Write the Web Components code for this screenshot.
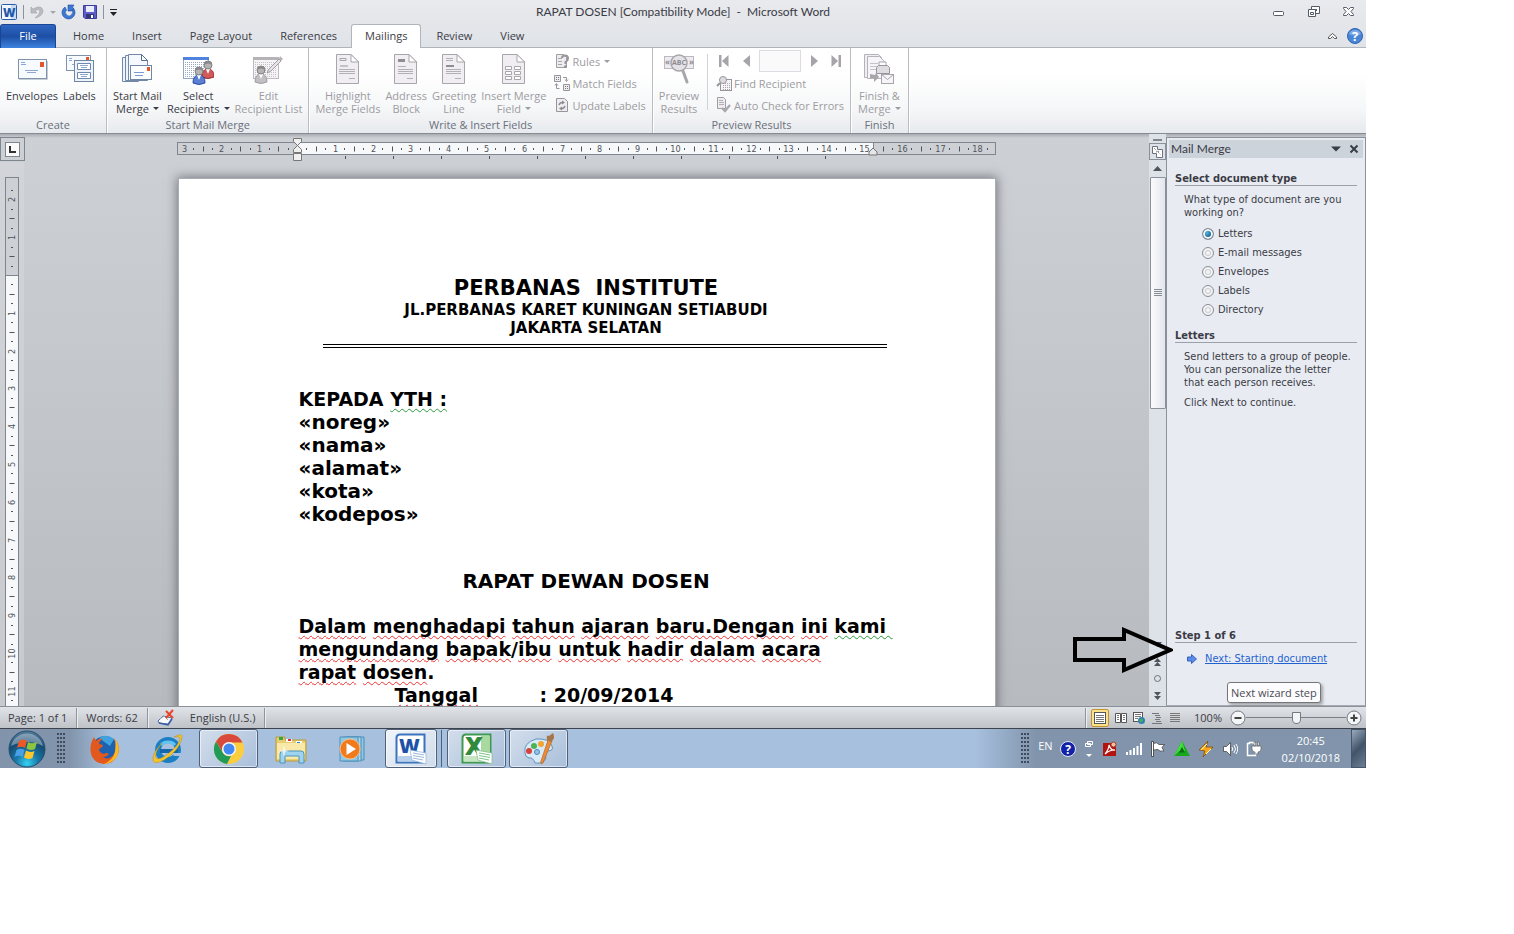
<!DOCTYPE html>
<html lang="en">
<head>
<meta charset="utf-8">
<title>RAPAT DOSEN [Compatibility Mode] - Microsoft Word</title>
<style>
  html, body { height: 100%; }
  body {
    margin: 0;
    background: #fff;
    font-family: "Open Sans", "Noto Sans", sans-serif;
    font-size: 11px;
    color: #3b3b45;
    overflow: hidden;
  }
</style>
</head>
<body>
<word-desktop></word-desktop>

<script>
// Shared by every element that has controls in its shadow root
const BASE_CSS = `
  * { box-sizing: border-box; }
  button {
    appearance: none; border: 0; padding: 0; margin: 0;
    background: none; font: inherit; color: inherit;
  }
  svg, word-icon { display: block; }
  .caret {
    display: inline-block; width: 0; height: 0; margin-left: 4px;
    border: 3px solid transparent; border-top-color: currentColor;
    border-bottom: 0; vertical-align: 3px;
  }
`;

const PAGE = `<path d="M4.500 1.500H19L26.500 9V30.500H4.500Z" fill="#f1eef3" stroke="#a8a5ab"/><path d="M19 1.500V9H26.500Z" fill="#fff" stroke="#a8a5ab"/>`;

const person = (x, y, body, edge) => `
  <path d="M${x - 6} ${y + 12}Q${x - 6} ${y + 4} ${x} ${y + 4}Q${x + 6} ${y + 4} ${x + 6} ${y + 12}Q${x} ${y + 15} ${x - 6} ${y + 12}Z" fill="${body}" stroke="${edge}"/>
  <path d="M${x - 2} ${y + 4}L${x} ${y + 9}L${x + 2} ${y + 4}Z" fill="#fff"/>
  <circle cx="${x}" cy="${y}" r="4" fill="#b4b4b4" stroke="#808080"/>
  <path d="M${x - 4} ${y}A4 4 0 0 1 ${x + 4} ${y}Q${x} ${y - 3} ${x - 4} ${y}Z" fill="#888"/>`;

const gridDots = (x, y, cols, rows, step, color) => {
  let d = "";
  for (let r = 0; r < rows; r++) {
    for (let c = 0; c < cols; c++) d += `M${x + c * step} ${y + r * step}h1v1h-1z`;
  }
  return `<path d="${d}" fill="${color}"/>`;
};

const ICONS = {
  word: [18, 18, `<rect x="1.500" y="1.500" width="15" height="15" rx="1" fill="#f3f8ff" stroke="#2b5caa"/><path d="M11 2h5v14h-5z" fill="#c7daf3"/><text x="3" y="14" font-family="Open Sans" font-weight="800" font-size="12" fill="#1f57a8">W</text>`],
  undo: [16, 16, `<path d="M2 3V9H8L6 7Q10 4 11 7Q11 10 6 14Q14 12 14 7Q13 0 4 5Z" fill="#b9bcc0" stroke="#9da1a6" stroke-width=".6"/>`],
  repeat: [16, 16, `<path d="M4 3A6.500 6.500 0 1 0 13 5L10.500 6A3.500 3.500 0 1 1 5.500 6Z" fill="#3c78d4" stroke="#1e4c9e" stroke-width=".6"/><path d="M7 1H13L11.500 3L13 5L10 7L7 7Z" fill="#3c78d4" stroke="#1e4c9e" stroke-width=".6"/>`],
  save: [16, 16, `<path d="M1.500 1.500H14.500V14.500H3L1.500 13Z" fill="#5b5fc7" stroke="#3a3c98"/><path d="M4 2H12V8H4Z" fill="#e9ecfa"/><path d="M4 10H12V14H4Z" fill="#34367c"/><path d="M9 11H11V14H9Z" fill="#fff"/>`],
  customize: [9, 9, `<path d="M1 1.500H8" stroke="#222"/><path d="M1 4H8L4.500 8Z" fill="#222"/>`],
  minimize: [14, 14, `<rect x="1.500" y="6.500" width="10" height="4" rx="1" fill="#fff" stroke="#545c69"/>`],
  restore: [14, 14, `<path d="M4.500 1.500h8v7h-8z" fill="#fff" stroke="#545c69"/><path d="M7 4h3v2h-3z" fill="#545c69"/><path d="M1.500 4.500h7v7h-7z" fill="#fff" stroke="#545c69"/><path d="M3.500 7.500h3v2h-3z" fill="none" stroke="#545c69"/>`],
  close: [14, 14, `<path d="M1.500 2.500h3l2 2 2-2h3v1l-2.500 3 2.500 3v1h-3l-2-2-2 2h-3v-1l2.500-3-2.500-3z" fill="#fff" stroke="#545c69"/>`],
  collapse: [11, 10, `<path d="M1.500 7.500V6L5.500 2.500L9.500 6V7.500H7.500L5.500 5.500L3.500 7.500Z" fill="#fff" stroke="#444" stroke-width=".9"/>`],
  help: [18, 18, `<circle cx="9" cy="9" r="7.500" fill="#4a86d8" stroke="#2f62b0"/><path d="M3 7A6.500 6.500 0 0 1 15 7Q9 10 3 7Z" fill="#7faae6"/><text x="9" y="14" text-anchor="middle" font-family="Open Sans" font-weight="700" font-size="13" fill="#fff">?</text>`],

  envelopes: [32, 32, `<rect x="2.500" y="6.500" width="28" height="19" fill="#f7fafe" stroke="#7f93ad"/><path d="M3 26.500H31.500V8" stroke="#c5ccd6" fill="none"/><path d="M24 9h4v5h-4z" fill="#e2562b"/><path d="M5 9.500h4M5 11.500h5M9 17.500h13M11 19.500h9" stroke="#8ba6cf"/>`],
  labels: [32, 32, `<rect x="3.500" y="2.500" width="24" height="15" fill="#f7fafe" stroke="#7f93ad"/><path d="M23 4h3v4h-3z" fill="#e2562b"/><path d="M6 5.500h3M6 7.500h3M9 11.500h2" stroke="#8ba6cf"/><rect x="11.500" y="7.500" width="19" height="21" fill="#eef3fa" stroke="#6f86a5"/><path d="M14.500 10.500h13v6h-13zM14.500 19.500h13v6h-13z" fill="#fff" stroke="#6c88b0"/><path d="M17 12.500h8M18 14.500h6M17 21.500h8M18 23.500h6" stroke="#8ba6cf"/>`],
  startMerge: [32, 32, `<path d="M1.500 4.500h16v24h-16z" fill="#edf3fb" stroke="#7288a6"/><path d="M4.500 2.500h16v25h-16z" fill="#edf3fb" stroke="#7288a6"/><path d="M7.500 1.500h13l6 6v20h-19z" fill="#f5f9ff" stroke="#7288a6"/><path d="M20.500 1.500v6h6z" fill="#fff" stroke="#56708f"/><rect x="9.500" y="12.500" width="21" height="14" fill="#fbfdff" stroke="#6f86a5"/><path d="M26 14h3v4h-3z" fill="#e2562b"/><path d="M13 19.500h10M14 22.500h8" stroke="#7a9bce"/>`],
  selectRecipients: [32, 32, `<rect x="1.500" y="4.500" width="25" height="21" fill="#fff" stroke="#93a7c2"/><path d="M1 4h26v3h-26z" fill="#4f83dc"/>${gridDots(3, 9, 11, 8, 2, "#9aaac2")}${person(26, 12, "#d35a5a", "#9e2f2f")}${person(17, 18, "#5d7fd3", "#2d4ea3")}`],
  editRecipients: [32, 32, `<rect x="1.500" y="4.500" width="25" height="21" fill="#f6f4f7" stroke="#bdbabf"/><path d="M1 4h26v3h-26z" fill="#b5b2b8"/>${gridDots(3, 9, 11, 8, 2, "#c4c1c7")}<path d="M15 20L17 16L27 6L29 8L19 18Z" fill="#e5e3e6" stroke="#a09da3"/><path d="M27 6L28 3L31 6L29 8Z" fill="#b5b2b8"/>${person(9, 17, "#c3c0c5", "#a09da3")}`],
  highlight: [32, 32, `${PAGE}<path d="M8 5.500h6v2h-6z" fill="none" stroke="#a8a5ab"/><path d="M8 12h8v2h-8z" fill="#c4c1c7"/><path d="M7 16.500h16M7 18.500h16M7 20.500h16M17 25.500h6" stroke="#b2afb5"/>`],
  address: [32, 32, `${PAGE}<path d="M8 6h7v3h-7z" fill="#8f8d92"/><path d="M8 13.500h8M8 16.500h15M8 18.500h15M8 20.500h15M17 25.500h6" stroke="#b2afb5"/>`],
  greeting: [32, 32, `${PAGE}<path d="M8 5.500h7M8 7.500h7M8 16.500h15M8 18.500h15M8 20.500h15M17 25.500h6" stroke="#b2afb5"/><path d="M8 12h8v2h-8z" fill="#8f8d92"/>`],
  insertField: [32, 32, `${PAGE}<path d="M7.500 13.500h6v3h-6zM16.500 13.500h6v3h-6zM7.500 18.500h6v3h-6zM16.500 18.500h6v3h-6zM7.500 23.500h6v3h-6zM16.500 23.500h6v3h-6z" fill="#fff" stroke="#a8a5ab"/>`],
  preview: [32, 32, `<rect x="1.500" y="3.500" width="29" height="12" fill="#eeecf0" stroke="#bdbabf"/><text x="2" y="12" font-family="Open Sans" font-weight="700" font-size="8" fill="#8d8a90">«</text><text x="26" y="12" font-family="Open Sans" font-weight="700" font-size="8" fill="#8d8a90">»</text><path d="M20 18L24 29" stroke="#a8a5ab" stroke-width="3" stroke-linecap="round"/><circle cx="16" cy="10" r="8" fill="#e4e2e6" stroke="#a8a5ab" stroke-width="1.500"/><text x="16" y="12" text-anchor="middle" font-family="Open Sans" font-weight="700" font-size="7" fill="#8d8a90">ABC</text>`],
  finish: [32, 32, `<path d="M1.500 1.500h14l3 3v20h-17z" fill="#f1eef3" stroke="#b5b2b8"/><path d="M4.500 3.500h12l6 6v16h-18z" fill="#f6f4f8" stroke="#b5b2b8"/><path d="M7 10.500h8M7 13.500h8M7 16.500h7" stroke="#c5c2c8"/><path d="M16 9h7v5h-7z" fill="#fff" stroke="#a8a5ab"/><path d="M13.500 14.500l2-2h9l2 2v6h-13z" fill="#dedce0" stroke="#98959b"/><path d="M7 21v4h4v4l5-5-3-4-1 2z" fill="#a8a5ab"/><rect x="18.500" y="21.500" width="12" height="9" fill="#f6f4f8" stroke="#a8a5ab"/><path d="M18.500 21.500l6 5 6-5" fill="none" stroke="#a8a5ab"/>`],

  rules: [16, 16, `<path d="M2.500 1.500h7l3 3v10h-10z" fill="#eeecf0" stroke="#a09da3"/><path d="M4 5.500h4M4 8.500h4M4 11.500h4" stroke="#a8a5ab"/><path d="M8 5q0-2.500 3-2.500t3 3q0 2-2.500 3.500v2" fill="none" stroke="#98959b" stroke-width="2"/><circle cx="11.500" cy="13.500" r="1.300" fill="#8d8a90"/>`],
  match: [16, 16, `<path d="M.5 .5h6v6h-6zM9.500 9.500h6v6h-6z" fill="#eeecf0" stroke="#98959b"/>${gridDots(2, 2, 2, 2, 2, "#777")}${gridDots(11, 11, 2, 2, 2, "#777")}<path d="M9 2.500h3.500v3M11 4.500l1.500 2 1.500-2M2.500 9v4.500h3M1 10.500l1.500-2 1.500 2" fill="none" stroke="#98959b"/>`],
  update: [16, 16, `<path d="M2.500 1.500h8l3 3v10h-11z" fill="#eeecf0" stroke="#98959b"/><path d="M5 8q1-3 4-2.500M11 9q-1 3-4 2.500" fill="none" stroke="#8d8a90" stroke-width="1.500"/><path d="M8 3.500l3 2-3 2zM8 9.500l-3 2 3 2z" fill="#8d8a90"/>`],
  first: [16, 16, `<path d="M3 2h2.500v12h-2.500zM12.500 2v12L6 8z" fill="#a6a4a9"/>`],
  prev: [16, 16, `<path d="M12 2v12L5 8z" fill="#a6a4a9"/>`],
  next: [16, 16, `<path d="M4 2v12L11 8z" fill="#a6a4a9"/>`],
  last: [16, 16, `<path d="M3.500 2v12L10 8zM10.500 2h2.500v12h-2.500z" fill="#a6a4a9"/>`],
  find: [16, 16, `<rect x="4.500" y="4.500" width="11" height="11" fill="#f6f4f7" stroke="#98959b"/>${gridDots(7, 8, 4, 4, 2, "#a8a5ab")}<circle cx="7" cy="5" r="3.500" fill="#dedce0" stroke="#98959b"/><path d="M4 8L1 11" stroke="#98959b" stroke-width="2"/>`],
  check: [16, 16, `<path d="M1.500 .5h6l2 2v9h-8z" fill="#eeecf0" stroke="#a09da3"/><path d="M3 3.500h4M3 5.500h5M3 7.500h5" stroke="#b2afb5"/><path d="M6 11L9 14L14 8" fill="none" stroke="#a8a5ab" stroke-width="2.200"/>`],

  toolbox: [12, 12, `<path d="M.5 .5h5v3h5v8h-6v-4h-4z" fill="#fff" stroke="#6d7480"/><path d="M2 2l7 7M4 6l4-1" stroke="#6d7480" stroke-dasharray="1 1"/>`],
  paneArrow: [10, 10, `<path d="M.5 3h4V.5L9.500 5 4.500 9.500V7h-4z" fill="#5a8be6" stroke="#3563c0"/>`],
  proof: [18, 18, `<path d="M1 12l5-5 9 2-4 6-9-1z" fill="#f7f9fd" stroke="#4a6caf"/><path d="M2 14l9 2 4-6" fill="none" stroke="#3a5da6" stroke-width="1.500"/><path d="M3 10l4-3 4 4" fill="none" stroke="#9aa"/><path d="M9 2l7 7M16 1l-7 8" stroke="#e8452a" stroke-width="2"/>`],
  printLayout: [12, 12, `<rect x=".5" y=".5" width="11" height="11" fill="#fff" stroke="#555"/><path d="M2 3.500h8M2 5.500h8M2 7.500h8M2 9.500h8" stroke="#777"/>`],
  reading: [12, 12, `<path d="M.5 1.500h5v9h-5zM6.500 1.500h5v9h-5z" fill="#fff" stroke="#555"/><path d="M2 3.500h2M2 5.500h2M2 7.500h2M8 3.500h2M8 5.500h2M8 7.500h2" stroke="#777"/>`],
  web: [12, 12, `<rect x=".5" y=".5" width="9" height="9" fill="#fff" stroke="#555"/><path d="M2 2.500h6M2 4.500h6M2 6.500h3" stroke="#777"/><circle cx="8.500" cy="8.500" r="3.500" fill="#2f7fb5"/><path d="M6 8q3-3 4 0-1 3-3 2z" fill="#4fae50"/>`],
  outline: [12, 12, `<path d="M1 1.500h7M4 3.500h5M5 5.500h5M4 7.500h5M5 9.500h5M1 11.500h10" stroke="#777"/>`],
  draft: [12, 12, `<path d="M1 1.500h10M1 3.500h10M1 5.500h10M1 7.500h10M1 9.500h10" stroke="#777"/>`],
  minus: [16, 16, `<circle cx="8" cy="8" r="7" fill="#f4f5f6" stroke="#747a82"/><path d="M4.500 8h7" stroke="#444" stroke-width="2"/>`],
  plus: [16, 16, `<circle cx="8" cy="8" r="7" fill="#f4f5f6" stroke="#747a82"/><path d="M4.500 8h7M8 4.500v7" stroke="#444" stroke-width="2"/>`],

  start: [38, 38, `<defs><radialGradient id="orb" cx=".5" cy=".9" r=".9"><stop offset="0" stop-color="#35d3f2"/><stop offset=".35" stop-color="#1a78a8"/><stop offset=".7" stop-color="#154a70"/><stop offset="1" stop-color="#5b7f9d"/></radialGradient></defs><circle cx="19" cy="19" r="18" fill="url(#orb)" stroke="#24506f"/><path d="M3 16A16.500 16.500 0 0 1 35 16Q19 8 3 16Z" fill="#fff" opacity=".35"/><path d="M11 11Q15 8 19 11L17 18Q13 15.500 9 18Z" fill="#ea5a28"/><path d="M20 12Q24 14.500 29 12L27 19Q22 21 18.500 18.500Z" fill="#8cc63f"/><path d="M8.500 20Q12.500 17.500 16.500 20L14.500 27Q10.500 24.500 6.500 27Z" fill="#4aa0e4"/><path d="M18 20.500Q22 23 26.500 21L24.500 28Q20 30 16 27.500Z" fill="#fcc62e"/>`],
  firefox: [32, 32, `<circle cx="16" cy="16" r="13" fill="#1d62b0"/><path d="M10 5Q17 0 25 6L21 13Z" fill="#3fa2dd"/><path d="M25 5Q32 13 29 21Q25 31 15 31Q3 30 1.500 18Q1 10 5 4L7 8Q10 5 14 6Q10 8 10 11L14 12Q14 14 10 16Q10 20 15 21Q18 19 20 21Q17 25 13 24Q20 28 25 21Q29 14 25 5Z" fill="#e3581c"/><path d="M26 6Q33 16 27 25Q21 31 15 31Q24 27 26 19Q27 11 26 6Z" fill="#fdb91d"/>`],
  ie: [34, 32, `<circle cx="18" cy="17" r="10" fill="none" stroke="#1b7fc4" stroke-width="6"/><path d="M10 16h18v4h-18z" fill="#1467ad"/><path d="M22 20h9v3l-7 0z" fill="#a8c0de"/><path d="M11 12A9 8 0 0 1 25 12" fill="none" stroke="#62c4f0" stroke-width="3"/><path d="M24 4Q33-1 32 5Q29 18 14 27Q2 33 3 25Q4 18 12 10Q4 20 6 25Q9 28 19 20Q30 11 30 5Q30 3 24 4Z" fill="#f4c430" stroke="#b98b12" stroke-width=".5"/>`],
  chrome: [32, 32, `<circle cx="16" cy="16" r="15" fill="#fccd3e"/><path d="M3 8.500A15 15 0 0 1 29.500 9.500H16A7 7 0 0 0 9.500 19Z" fill="#d94a3d"/><path d="M3 8.500L10 20Q13 24 18 23L14 31A15 15 0 0 1 3 8.500Z" fill="#229a58"/><circle cx="16" cy="16" r="7" fill="#f4f6f8"/><circle cx="16" cy="16" r="5.500" fill="#4387f2"/>`],
  explorer: [34, 32, `<path d="M2 4h9v3h21v21H2z" fill="#e9cf72" stroke="#b8993a"/><path d="M5 4h4v3h-4z" fill="#35a544"/><path d="M12 6h6v3h-6z" fill="#fff"/><path d="M14 6h3v2h-3z" fill="#d33"/><path d="M22 8h6v3h-6z" fill="#fff"/><path d="M23 9h3v1h-3z" fill="#28d"/><path d="M3 10h28v16H3z" fill="#f8e9a8"/><path d="M6 30V21Q6 18 9 18H27Q30 18 30 21V30H25V23H11V30Z" fill="#9fd4ef" stroke="#4f93bb"/><path d="M10 12l1 5 4 1-4 1-1 5-1-5-4-1 4-1z" fill="#fff" opacity=".8"/>`],
  media: [32, 32, `<path d="M10 4h17v23h-17z" fill="#8fc4e2" stroke="#4c8fb8"/><path d="M6 4h18v24h-18z" fill="#a9d5ec" stroke="#4c8fb8"/><path d="M3 4h18v24h-18z" fill="#8fc8e6" stroke="#4c8fb8"/><circle cx="13" cy="16" r="10" fill="#f07b1d" stroke="#f9c08a"/><path d="M9.500 10v12L19 16z" fill="#fff"/>`],
  wordApp: [32, 32, `<path d="M1.500 5Q1.500 1.500 5 1.500H29.500V29.500H1.500Z" fill="#fff" stroke="#3a72be" stroke-width="2"/><path d="M3 23H29V28.500H3Z" fill="#b9d0ec"/><text x="4" y="20" font-family="Open Sans" font-weight="800" font-size="20" fill="#1d52a8">W</text><path d="M15 17L31 20V31L17 27Z" fill="#fff" stroke="#8fb2df" stroke-width=".7"/><path d="M18 20l11 2M18 22.500l11 2M18 25l10 2" stroke="#9db8da"/>`],
  excelApp: [32, 32, `<path d="M1.500 5Q1.500 1.500 5 1.500H29.500V29.500H1.500Z" fill="#fff" stroke="#3d9a50" stroke-width="2"/><path d="M20 3H28.500V28.500H20Z" fill="#a9d99f"/><path d="M3 23H29V28.500H3Z" fill="#c6e5c1"/><text x="4" y="22" font-family="Open Sans" font-weight="800" font-size="25" fill="#2f8a3e">X</text><path d="M15 17L31 20V31L17 27Z" fill="#fff" stroke="#7cb884" stroke-width=".7"/><path d="M18 20l11 2M18 22.500l11 2M18 25l10 2" stroke="#7cc488"/>`],
  paint: [34, 32, `<path d="M3 20Q1 10 14 6Q27 5 30 13Q32 18 25 18Q21 20 24 25Q22 31 13 30Q11 24 7 25Q3 24 3 20Z" fill="#d8eaf7" stroke="#5d93bd"/><circle cx="7" cy="18" r="3" fill="#d8403a"/><circle cx="12" cy="13" r="3" fill="#4db252"/><circle cx="19" cy="11" r="3" fill="#f1a531"/><circle cx="15" cy="19" r="2.500" fill="#8fc6e8" stroke="#4f86b0"/><path d="M26 7L30 8L21 30Q18 32 19 28Z" fill="#ee8b36" stroke="#a65c1c" stroke-width=".6"/><path d="M25 7Q24 1 27 3L31 0Q34 5 29 9Z" fill="#a5764a"/>`],

  trayHelp: [16, 16, `<circle cx="8" cy="8" r="7.500" fill="#1122a8" stroke="#e5e8f4"/><text x="8" y="13" text-anchor="middle" font-family="Open Sans" font-weight="700" font-size="12" fill="#fff">?</text>`],
  langBar: [10, 18, `<path d="M3.500 1.500h5v3h-5zM1.500 3.500h5v3h-5z" fill="#8194ab" stroke="#fff"/><path d="M2 14h6l-3 3z" fill="#fff"/>`],
  pdf: [16, 16, `<path d="M1 2h13v13H1z" fill="#b3140f"/><path d="M3 13Q7 8 7 4Q9 10 13 9Q7 9 3 13" fill="none" stroke="#fff" stroke-width="1.200"/><circle cx="11.500" cy="3.500" r="2.500" fill="#f2c7a0" stroke="#a2382e"/>`],
  signal: [16, 16, `<path d="M0 11h2v3h-2zM3.500 9h2v5h-2zM7 7h2v7h-2zM10.500 5h2v9h-2zM14 2h2v12h-2z" fill="#fff"/>`],
  flag: [16, 16, `<path d="M1.500 .5h2v15h-2z" fill="#fff" stroke="#333" stroke-width=".8"/><path d="M3.500 2.500Q7 .5 9 3.500H14.500L12 6.500L14 10Q9 11 8 8.500L3.500 9Z" fill="#fff" stroke="#444" stroke-width=".8"/>`],
  smadav: [16, 16, `<path d="M8 0L16 15H0Z" fill="#16a81c"/><path d="M8 0L11 10H5L0 15Z" fill="#42dd3c"/><path d="M8 6L11 11.500H5Z" fill="#0a6d10"/>`],
  winamp: [16, 16, `<path d="M1 9L10 0 8 6H15L5 16 7 10Z" fill="#f6a821" stroke="#7d4d12" stroke-width=".8"/><path d="M3 9L9 3M8 13L13 8" stroke="#fff2a8"/>`],
  volume: [16, 16, `<path d="M1.500 5.500h3L8.500 1.500v13l-4-4h-3z" fill="#fff" stroke="#444" stroke-width=".8"/><path d="M10 6q1.500 2 0 4M12 4q3 4 0 8M14 3q3.500 5 0 10" fill="none" stroke="#fff"/>`],
  power: [16, 16, `<path d="M1.500 2.500h2v-1h4v1h2v12h-8z" fill="none" stroke="#fff" stroke-width="1.500"/><path d="M6 5h9v3q0 3-3 3v2h-3v-2q-3 0-3-3zM8 1h1.500v4H8zM11.500 1H13v4h-1.500z" fill="#fff" stroke="#555" stroke-width=".6"/>`],
};

class WordIcon extends HTMLElement {
  constructor() {
    super();
    this.attachShadow({ mode: "open" });
  }

  connectedCallback() {
    const [w, h, body] = ICONS[this.getAttribute("name")];
    this.shadowRoot.innerHTML = `
      <style>:host { display: inline-block; flex: none; } svg { display: block; }</style>
      <svg width="${w}" height="${h}" viewBox="0 0 ${w} ${h}" aria-hidden="true">${body}</svg>
    `;
  }
}

class WordTitlebar extends HTMLElement {
  constructor() {
    super();
    this.attachShadow({ mode: "open" });
    this.shadowRoot.innerHTML = `
      <style>
        ${BASE_CSS}
        :host {
          display: grid; grid-template-columns: 1fr auto 1fr; align-items: center;
          height: 24px; background: linear-gradient(#e8eaed, #e4e6ea);
        }
        .quick { display: flex; align-items: center; gap: 5px; }
        .quick .sep { width: 1px; height: 14px; background: #8d9299; }
        .quick .caret { margin: 0; color: #a4a8ad; }
        .title {
          margin: 0; font: 12px/16px "Lato", "Open Sans", sans-serif;
          color: #3b3b45; white-space: pre;
        }
        .win { display: flex; justify-content: flex-end; gap: 21px; padding-right: 10px; }
      </style>
      <div class="quick">
        <word-icon name="word"></word-icon>
        <span class="sep"></span>
        <button aria-label="Undo"><word-icon name="undo"></word-icon></button>
        <span class="caret"></span>
        <button aria-label="Repeat"><word-icon name="repeat"></word-icon></button>
        <button aria-label="Save"><word-icon name="save"></word-icon></button>
        <span class="sep"></span>
        <button aria-label="Customize"><word-icon name="customize"></word-icon></button>
      </div>
      <h1 class="title"><slot></slot></h1>
      <div class="win">
        <button aria-label="Minimize"><word-icon name="minimize"></word-icon></button>
        <button aria-label="Restore"><word-icon name="restore"></word-icon></button>
        <button aria-label="Close"><word-icon name="close"></word-icon></button>
      </div>
    `;
  }
}

class WordTabs extends HTMLElement {
  constructor() {
    super();
    this.attachShadow({ mode: "open" });
    this.shadowRoot.innerHTML = `
      <style>
        ${BASE_CSS}
        :host {
          display: flex; height: 24px; background: linear-gradient(#e4e6ea, #dfe3e7);
          box-shadow: inset 0 -1px #b0b5bb;
        }
        button { padding: 0 13px 2px; border: 1px solid transparent; border-bottom: 0; }
        .file {
          width: 56px; margin-right: 3px; color: #fff; border-color: #1a4594;
          border-radius: 3px 3px 0 0;
          background: linear-gradient(#2f66c2, #1d4fa4 50%, #3d82e0);
        }
        .on { background: #fff; border-color: #b0b5bb; border-radius: 3px 3px 0 0; margin-right: 1px; }
        .tools { display: flex; align-items: center; gap: 8px; margin-left: auto; padding-right: 2px; }
        .tools button { padding: 0; border: 0; }
      </style>
      <button class="file">File</button>
      <button>Home</button>
      <button>Insert</button>
      <button>Page Layout</button>
      <button>References</button>
      <button class="on">Mailings</button>
      <button>Review</button>
      <button>View</button>
      <div class="tools">
        <button aria-label="Minimize the Ribbon"><word-icon name="collapse"></word-icon></button>
        <button aria-label="Help"><word-icon name="help"></word-icon></button>
      </div>
    `;
  }
}

class RibbonGroup extends HTMLElement {
  constructor() {
    super();
    this.attachShadow({ mode: "open" });
    this.shadowRoot.innerHTML = `
      <style>
        :host {
          display: flex; flex-direction: column; padding: 0 6px; box-sizing: border-box;
          border-right: 1px solid #b9bdc3; box-shadow: 1px 0 #fff;
        }
        .items { display: flex; flex: 1; gap: 5px; }
        .label { height: 17px; line-height: 17px; text-align: center; color: #6b6f7b; }
      </style>
      <div class="items"><slot></slot></div>
      <div class="label"></div>
    `;
  }

  connectedCallback() {
    this.shadowRoot.querySelector(".label").textContent = this.getAttribute("label");
  }
}

class RibbonButton extends HTMLElement {
  constructor() {
    super();
    this.attachShadow({ mode: "open" });
  }

  connectedCallback() {
    const off = this.hasAttribute("off") ? "disabled" : "";
    const menu = this.hasAttribute("menu") ? `<span class="caret"></span>` : "";
    this.shadowRoot.innerHTML = `
      <style>
        ${BASE_CSS}
        :host { display: block; }
        button {
          display: flex; flex-direction: column; align-items: center;
          padding-top: 5px; line-height: 13px; white-space: nowrap;
        }
        .text { padding-top: 4px; }
        button:disabled { color: #9d9ca2; }
        :host([small]) button { flex-direction: row; gap: 2px; height: 22px; padding: 0; }
        :host([small]) .text { padding: 0; }
      </style>
      <button ${off}>
        <word-icon name="${this.getAttribute("icon")}"></word-icon>
        <span class="text"><slot></slot>${menu}</span>
      </button>
    `;
  }
}

class RecordNav extends HTMLElement {
  constructor() {
    super();
    this.attachShadow({ mode: "open" });
    this.shadowRoot.innerHTML = `
      <style>
        ${BASE_CSS}
        :host { display: flex; align-items: center; justify-content: space-between; height: 22px; }
        input {
          width: 42px; height: 22px; padding: 0 2px; font: inherit;
          border: 1px solid #dcdce2; background: #fafafb;
        }
      </style>
      <button disabled aria-label="First record"><word-icon name="first"></word-icon></button>
      <button disabled aria-label="Previous record"><word-icon name="prev"></word-icon></button>
      <input disabled aria-label="Record">
      <button disabled aria-label="Next record"><word-icon name="next"></word-icon></button>
      <button disabled aria-label="Last record"><word-icon name="last"></word-icon></button>
    `;
  }
}

class WordRibbon extends HTMLElement {
  constructor() {
    super();
    this.attachShadow({ mode: "open" });
    this.shadowRoot.innerHTML = `
      <style>
        :host {
          display: flex; height: 85px; border-bottom: 1px solid #868c94;
          background: linear-gradient(#fff 30%, #f6f7f8 70%, #e7eaee);
        }
        .col { display: flex; flex-direction: column; padding: 2px 0 0 3px; }
        .sep { width: 1px; height: 56px; margin: 6px 0 0 3px; background: #d0d3d8; }
        .create { width: 107px; }
        .finish { padding: 0 7px; }
      </style>
      <ribbon-group class="create" label="Create">
        <ribbon-button icon="envelopes">Envelopes</ribbon-button>
        <ribbon-button icon="labels">Labels</ribbon-button>
      </ribbon-group>
      <ribbon-group label="Start Mail Merge">
        <ribbon-button icon="startMerge" menu>Start Mail<br>Merge</ribbon-button>
        <ribbon-button icon="selectRecipients" menu>Select<br>Recipients</ribbon-button>
        <ribbon-button icon="editRecipients" off>Edit<br>Recipient List</ribbon-button>
      </ribbon-group>
      <ribbon-group label="Write &amp; Insert Fields">
        <ribbon-button icon="highlight" off>Highlight<br>Merge Fields</ribbon-button>
        <ribbon-button icon="address" off>Address<br>Block</ribbon-button>
        <ribbon-button icon="greeting" off>Greeting<br>Line</ribbon-button>
        <ribbon-button icon="insertField" off menu>Insert Merge<br>Field</ribbon-button>
        <div class="col">
          <ribbon-button small icon="rules" off menu>Rules</ribbon-button>
          <ribbon-button small icon="match" off>Match Fields</ribbon-button>
          <ribbon-button small icon="update" off>Update Labels</ribbon-button>
        </div>
      </ribbon-group>
      <ribbon-group label="Preview Results">
        <ribbon-button icon="preview" off>Preview<br>Results</ribbon-button>
        <span class="sep"></span>
        <div class="col">
          <record-nav></record-nav>
          <ribbon-button small icon="find" off>Find Recipient</ribbon-button>
          <ribbon-button small icon="check" off>Auto Check for Errors</ribbon-button>
        </div>
      </ribbon-group>
      <ribbon-group class="finish" label="Finish">
        <ribbon-button icon="finish" off menu>Finish &amp;<br>Merge</ribbon-button>
      </ribbon-group>
    `;
  }
}

// Centimetre ruler. "from" and "to" are where the bar starts and ends,
// measured in pixels from the zero mark; "end" is where the text area stops.
class DocRuler extends HTMLElement {
  constructor() {
    super();
    this.attachShadow({ mode: "open" });
  }

  connectedCallback() {
    const CM = 37.8;
    const from = Number(this.getAttribute("from"));
    const to = Number(this.getAttribute("to"));
    const end = Number(this.getAttribute("end"));
    const vertical = this.hasAttribute("vertical");
    const place = (p) => Math.round(p) + 0.5;
    let marks = "";
    let text = "";
    for (let q = Math.ceil((from + 4) / CM * 4); q * CM / 4 < to - 4; q++) {
      const p = place(q * CM / 4);
      if (q === 0) continue;
      if (q % 4 === 0) {
        const n = Math.abs(q / 4);
        text += vertical
          ? `<text transform="translate(10 ${p}) rotate(-90)">${n}</text>`
          : `<text x="${p}" y="10">${n}</text>`;
      } else {
        const r = q % 2 === 0 ? 2.5 : 1;
        marks += vertical ? `M${7 - r} ${p}h${r * 2}` : `M${p} ${7 - r}v${r * 2}`;
      }
    }
    const len = to - from + 1;
    let extra = "";
    if (!vertical) {
      for (let x = 48; x < end - 24; x += 48) marks += `M${x + 0.5} 14v3`;
      extra = `
        <path d="M-3.500-3.500h8v3l-4 4 4 4v3h-8v-3l4-4-4-4zM-3.500 11.500h8v7h-8z" fill="#f0f0f0" stroke="#777"/>
        <path d="M${end - 4} 13v-3l4-4 4 4v3z" fill="#e6e6e6" stroke="#777"/>
      `;
    }
    const box = vertical
      ? [`0 ${from} 14 ${len}`, 14, len]
      : [`${from} 0 ${len} 14`, len, 14];
    const rect = (a, b, fill) => vertical
      ? `<rect x=".5" y="${a + 0.5}" width="13" height="${b - a}" fill="${fill}" stroke="#80858f"/>`
      : `<rect x="${a + 0.5}" y=".5" width="${b - a}" height="12" fill="${fill}" stroke="#80858f"/>`;
    this.shadowRoot.innerHTML = `
      <style>
        :host { display: block; }
        svg { display: block; overflow: visible; }
        text { font: 9px "DejaVu Sans Condensed", "DejaVu Sans", sans-serif; fill: #50535b; text-anchor: middle; }
      </style>
      <svg width="${box[1]}" height="${box[2]}" viewBox="${box[0]}">
        ${rect(from, to, "#cdd0d5")}
        ${rect(0, end, "#f7f8f9")}
        <path d="${marks}" stroke="#50535b"/>
        ${text}${extra}
      </svg>
    `;
  }
}

class DocPage extends HTMLElement {
  constructor() {
    super();
    this.attachShadow({ mode: "open" });
    this.shadowRoot.innerHTML = `
      <style>
        :host {
          display: block; width: 818px; min-height: 1056px; box-sizing: border-box;
          padding: 96px 121px 0 120px; background: #fff; color: #000;
          border: 1px solid #a9adb3; border-bottom: 0;
          box-shadow: 0 0 10px 1px rgba(60, 64, 70, .6);
          font: bold 19px/23px "DejaVu Sans", Verdana, sans-serif;
        }
        p, h2, h3 { margin: 0; font: inherit; white-space: pre; }
        .head { text-align: center; font-size: 15px; line-height: 18px; }
        .head h2 { font-size: 21px; line-height: 26px; }
        hr {
          height: 4px; margin: 7px -13px 40px 24px; box-sizing: border-box;
          border: solid #000; border-width: 1px 0;
        }
        .field { font-size: 20px; }
        h3 { margin: 44px 0 22px; font-size: 20px; text-align: center; }
        .row { display: grid; grid-template-columns: 145px auto; padding-left: 96px; }
        s, u {
          text-decoration: underline wavy #e33 1px; text-decoration-skip-ink: none;
          text-underline-offset: 2px;
        }
        u { text-decoration-color: #2a9a3a; }
      </style>
      <div class="head">
        <h2>PERBANAS  INSTITUTE</h2>
        <p>JL.PERBANAS KARET KUNINGAN SETIABUDI</p>
        <p>JAKARTA SELATAN</p>
      </div>
      <hr>
      <p>KEPADA <u>YTH :</u></p>
      <p class="field">«noreg»</p>
      <p class="field">«nama»</p>
      <p class="field">«alamat»</p>
      <p class="field">«kota»</p>
      <p class="field">«kodepos»</p>
      <h3>RAPAT DEWAN DOSEN</h3>
      <p><s>Dalam</s> <s>menghadapi</s> <s>tahun</s> <s>ajaran</s> <s>baru.Dengan</s> <s>ini</s> <u>kami </u></p>
      <p><s>mengundang</s> <s>bapak</s>/<s>ibu</s> <s>untuk</s> <s>hadir</s> <s>dalam</s> <s>acara</s></p>
      <p><s>rapat</s> <s>dosen</s>.</p>
      <p class="row"><span><s>Tanggal</s></span><span>: 20/09/2014</span></p>
    `;
  }
}

class DocScrollbar extends HTMLElement {
  constructor() {
    super();
    this.attachShadow({ mode: "open" });
    this.shadowRoot.innerHTML = `
      <style>
        ${BASE_CSS}
        :host {
          display: flex; flex-direction: column; align-items: center;
          width: 17px; padding: 5px 0 2px; background: #dde1e8;
        }
        .split { width: 9px; height: 2px; background: #80858f; }
        .tool { width: 17px; height: 17px; padding: 2px; margin-top: 2px; border: 1px solid #8b919b; }
        .arrow { width: 17px; height: 17px; display: grid; place-items: center; }
        .thumb {
          width: 16px; flex: 0 0 41%; display: grid; place-items: center;
          border: 1px solid #8b919b; border-radius: 1px;
          background: linear-gradient(90deg, #fbfbfd, #e3e6ed);
        }
        .nav { margin-top: auto; display: flex; flex-direction: column; }
      </style>
      <span class="split"></span>
      <button class="tool" aria-label="View Ruler"><word-icon name="toolbox"></word-icon></button>
      <button class="arrow" aria-label="Scroll up"><svg width="9" height="5"><path d="M0 5L4.500 0 9 5z" fill="#50535b"/></svg></button>
      <div class="thumb"><svg width="8" height="8"><path d="M0 .5h8M0 2.500h8M0 4.500h8M0 6.500h8" stroke="#888e98"/></svg></div>
      <div class="nav">
        <button class="arrow" aria-label="Scroll down"><svg width="9" height="5"><path d="M0 0L4.500 5 9 0z" fill="#50535b"/></svg></button>
        <button class="arrow" aria-label="Previous page"><svg width="7" height="8"><path d="M0 4L3.500 0 7 4zM0 8L3.500 4 7 8z" fill="#50535b"/></svg></button>
        <button class="arrow" aria-label="Select browse object"><svg width="9" height="9"><circle cx="4.500" cy="4.500" r="3" fill="none" stroke="#6b6f78"/></svg></button>
        <button class="arrow" aria-label="Next page"><svg width="7" height="8"><path d="M0 0L3.500 4 7 0zM0 4L3.500 8 7 4z" fill="#50535b"/></svg></button>
      </div>
    `;
  }
}

class PaneSection extends HTMLElement {
  constructor() {
    super();
    this.attachShadow({ mode: "open" });
    this.shadowRoot.innerHTML = `
      <style>
        :host { display: block; }
        h3 {
          margin: 0 0 7px; font: bold 11px/13px "DejaVu Sans Condensed", "DejaVu Sans", sans-serif;
          border-bottom: 1px solid #9ba0a9;
        }
        .body { padding-left: 9px; }
      </style>
      <h3></h3>
      <div class="body"><slot></slot></div>
    `;
  }

  connectedCallback() {
    this.shadowRoot.querySelector("h3").textContent = this.getAttribute("heading");
  }
}

class MergePane extends HTMLElement {
  constructor() {
    super();
    this.attachShadow({ mode: "open" });
    const types = ["Letters", "E-mail messages", "Envelopes", "Labels", "Directory"];
    this.shadowRoot.innerHTML = `
      <style>
        ${BASE_CSS}
        :host {
          display: flex; flex-direction: column; width: 200px; box-sizing: border-box;
          margin-top: 3px; padding: 2px; border: 1px solid #8b919b; border-bottom-color: #a8adb5;
          background: #e8ecf2;
        }
        header {
          display: flex; align-items: center; gap: 8px; height: 18px; padding: 0 4px 0 2px;
          background: #cdd3db;
        }
        header h2 { flex: 1; margin: 0; font: 12px/18px "Lato", "Open Sans", sans-serif; }
        .content {
          flex: 1; display: flex; flex-direction: column; padding: 14px 6px 0;
          font: 11px/13px "DejaVu Sans Condensed", "DejaVu Sans", sans-serif;
        }
        p { margin: 0; }
        .types { margin: 5px 0 10px; padding: 0 0 0 18px; border: 0; min-width: 0; }
        label { display: flex; align-items: center; gap: 4px; height: 19px; }
        input {
          appearance: none; width: 12px; height: 12px; margin: 0; border-radius: 50%;
          border: 1px solid #8b8f96; background: #f4f4f6;
          box-shadow: inset 0 0 0 2px #f4f4f6, inset 0 0 0 3px #c9ccd1;
        }
        input:checked { background: radial-gradient(circle at 40% 40%, #4fb9e6, #0c4f7d 60%); box-shadow: inset 0 0 0 2px #f4f4f6; }
        .more { margin-top: 7px; }
        .step { margin-top: auto; padding-bottom: 38px; }
        .next { position: relative; display: flex; align-items: center; gap: 8px; padding: 2px 0 0 3px; }
        a { color: #1f62d0; }
        .tip {
          position: absolute; left: 43px; top: 32px; padding: 1px 3px; white-space: nowrap;
          font: 11px/17px "Open Sans", sans-serif; color: #4b4b52; background: #fcfcfe;
          border: 1px solid #767676; border-radius: 3px; box-shadow: 2px 2px 3px rgba(0, 0, 0, .3);
        }
      </style>
      <header>
        <h2>Mail Merge</h2>
        <button aria-label="Task pane options"><svg width="10" height="6"><path d="M0 .5h10L5 5.500z" fill="#3a3d44"/></svg></button>
        <button aria-label="Close task pane"><svg width="10" height="10"><path d="M1.500 1.500l7 7M8.500 1.500l-7 7" stroke="#3a3d44" stroke-width="2"/></svg></button>
      </header>
      <div class="content">
        <pane-section heading="Select document type">
          <p>What type of document are you<br>working on?</p>
          <fieldset class="types" aria-label="Document type">
            ${types.map((t, i) => `<label><input type="radio" name="type" ${i ? "" : "checked"}>${t}</label>`).join("")}
          </fieldset>
        </pane-section>
        <pane-section heading="Letters">
          <p>Send letters to a group of people.<br>You can personalize the letter<br>that each person receives.</p>
          <p class="more">Click Next to continue.</p>
        </pane-section>
        <pane-section class="step" heading="Step 1 of 6">
          <div class="next">
            <word-icon name="paneArrow"></word-icon>
            <a href="#next">Next: Starting document</a>
            <span class="tip" role="tooltip">Next wizard step</span>
          </div>
        </pane-section>
      </div>
    `;
  }
}

class WordWorkspace extends HTMLElement {
  constructor() {
    super();
    this.attachShadow({ mode: "open" });
    this.shadowRoot.innerHTML = `
      <style>
        ${BASE_CSS}
        :host {
          position: relative; display: flex; min-height: 0; overflow: hidden;
          background: linear-gradient(#a9adb2, #cdd0d5 4px, #cbced3 60px, #b7babe);
        }
        .doc {
          flex: 1; min-width: 0; display: grid;
          grid-template-columns: 24px 1fr; grid-template-rows: 28px 1fr;
        }
        .corner { display: grid; place-items: center; width: 25px; height: 24px; margin-top: 3px; border: 1px solid #7e868f; }
        .corner i { display: grid; place-items: center; width: 15px; height: 15px; border: 1px solid #7e868f; background: #fafafb; }
        .across { display: flex; justify-content: center; padding-top: 8px; }
        .down { padding: 15px 0 0 5px; min-height: 0; background: rgba(215, 218, 222, .5); overflow: hidden; }
        .view { display: flex; justify-content: center; align-items: flex-start; padding-top: 16px; min-height: 0; overflow: hidden; }
        .pointer { position: absolute; right: 193px; bottom: 33px; }
      </style>
      <div class="doc">
        <button class="corner" aria-label="Left tab"><i><svg width="7" height="7"><path d="M1 0v6h6" fill="none" stroke="#333" stroke-width="2"/></svg></i></button>
        <div class="across"><doc-ruler from="-120" to="698" end="576"></doc-ruler></div>
        <div class="down"><doc-ruler vertical from="-98" to="431" end="440"></doc-ruler></div>
        <div class="view"><doc-page></doc-page></div>
      </div>
      <doc-scrollbar></doc-scrollbar>
      <merge-pane></merge-pane>
      <svg class="pointer" width="100" height="46"><path d="M2 12h49V3l46 20-46 20V33H2z" fill="none" stroke="#000" stroke-width="4"/></svg>
    `;
  }
}

class WordStatus extends HTMLElement {
  constructor() {
    super();
    this.attachShadow({ mode: "open" });
    this.shadowRoot.innerHTML = `
      <style>
        ${BASE_CSS}
        :host {
          display: flex; align-items: center; height: 23px; padding: 0 4px 0 8px;
          border-top: 1px solid #8b9097; border-bottom: 1px solid #3c434c; box-sizing: border-box;
          background: linear-gradient(#e0e3e7, #bfc3c8); gap: 9px;
        }
        .sep { width: 1px; height: 20px; background: #90959c; box-shadow: 1px 0 #eceef0; }
        .lang { margin-left: 6px; }
        .push { margin-left: auto; }
        .views { display: flex; align-items: center; gap: 6px; margin-left: -4px; }
        .views button:first-child {
          padding: 2px; border: 1px solid #c2932c; border-radius: 2px; background: #fde28e;
        }
        .zoom { display: flex; align-items: center; }
        .zoom span { margin: 0 8px 0 4px; }
        input {
          appearance: none; width: 100px; height: 14px; margin: 0;
          background: linear-gradient(#7b8088, #7b8088) center / 100% 1px no-repeat;
        }
        input::-webkit-slider-thumb {
          appearance: none; width: 9px; height: 12px; background: #f4f5f6;
          border: 1px solid #747a82; border-radius: 1px 1px 5px 5px;
        }
      </style>
      <button>Page: 1 of 1</button><span class="sep"></span>
      <button>Words: 62</button><span class="sep"></span>
      <button aria-label="Proofing errors"><word-icon name="proof"></word-icon></button>
      <button class="lang">English (U.S.)</button><span class="sep"></span>
      <span class="sep push"></span>
      <div class="views">
        <button aria-label="Print Layout"><word-icon name="printLayout"></word-icon></button>
        <button aria-label="Full Screen Reading"><word-icon name="reading"></word-icon></button>
        <button aria-label="Web Layout"><word-icon name="web"></word-icon></button>
        <button aria-label="Outline"><word-icon name="outline"></word-icon></button>
        <button aria-label="Draft"><word-icon name="draft"></word-icon></button>
      </div>
      <div class="zoom">
        <span>100%</span>
        <button aria-label="Zoom out"><word-icon name="minus"></word-icon></button>
        <input type="range" aria-label="Zoom" value="50">
        <button aria-label="Zoom in"><word-icon name="plus"></word-icon></button>
      </div>
    `;
  }
}

class WinTaskbar extends HTMLElement {
  constructor() {
    super();
    this.attachShadow({ mode: "open" });
    this.shadowRoot.innerHTML = `
      <style>
        ${BASE_CSS}
        :host {
          display: flex; align-items: stretch; height: 39px; color: #fff;
          background: linear-gradient(90deg, #8194ab 70px, #a7c0de 110px, #a7c0de calc(100% - 390px), #8194ab calc(100% - 330px));
        }
        .start { width: 54px; display: grid; place-items: center; }
        .grip {
          width: 9px; margin: 4px 3px;
          background: radial-gradient(circle at 1px 1px, #3f4c5c 1px, transparent 1px) 0 0 / 3px 4px;
        }
        .apps { display: flex; gap: 3px; margin-left: 6px; }
        .apps button { width: 59px; display: grid; place-items: center; border-radius: 3px; }
        .apps .run {
          border: 1px solid #4f6078; box-shadow: inset 0 0 0 1px rgba(255, 255, 255, .55);
          background: linear-gradient(135deg, #d3deec, #a9bfda);
        }
        .apps .front { background: linear-gradient(135deg, #f0f5fa, #cfdcea); width: 52px; }
        .apps .stack { position: relative; margin-right: 7px; }
        .apps .stack::after {
          content: ""; position: absolute; left: 51px; top: 0; bottom: 0; width: 4px;
          border-right: 1px solid #4f6078;
        }
        .tray { display: flex; align-items: center; margin-left: auto; }
        .tray .grip { align-self: stretch; margin-right: 8px; }
        .icons { display: flex; align-items: center; gap: 8px; margin: 0 20px 0 7px; }
        .lang { margin-top: -6px; }
        .clock { line-height: 17px; text-align: center; margin-right: 11px; }
        .desktop {
          align-self: stretch; width: 15px; border: 1px solid #45566b;
          background: linear-gradient(135deg, #9aaabd, #43546a 50%, #6d7f95);
        }
      </style>
      <button class="start" aria-label="Start"><word-icon name="start"></word-icon></button>
      <span class="grip"></span>
      <div class="apps">
        <button aria-label="Firefox"><word-icon name="firefox"></word-icon></button>
        <button aria-label="Internet Explorer"><word-icon name="ie"></word-icon></button>
        <button class="run" aria-label="Chrome"><word-icon name="chrome"></word-icon></button>
        <button aria-label="Explorer"><word-icon name="explorer"></word-icon></button>
        <button aria-label="Media Player"><word-icon name="media"></word-icon></button>
        <button class="run front stack" aria-label="Word"><word-icon name="wordApp"></word-icon></button>
        <button class="run" aria-label="Excel"><word-icon name="excelApp"></word-icon></button>
        <button class="run" aria-label="Paint"><word-icon name="paint"></word-icon></button>
      </div>
      <div class="tray">
        <span class="grip"></span>
        <span class="lang">EN</span>
        <div class="icons">
          <word-icon name="trayHelp"></word-icon>
          <word-icon name="langBar"></word-icon>
          <word-icon name="pdf"></word-icon>
          <word-icon name="signal"></word-icon>
          <word-icon name="flag"></word-icon>
          <word-icon name="smadav"></word-icon>
          <word-icon name="winamp"></word-icon>
          <word-icon name="volume"></word-icon>
          <word-icon name="power"></word-icon>
        </div>
        <div class="clock">20:45<br>02/10/2018</div>
        <button class="desktop" aria-label="Show desktop"></button>
      </div>
    `;
  }
}

class WordDesktop extends HTMLElement {
  constructor() {
    super();
    this.attachShadow({ mode: "open" });
    this.shadowRoot.innerHTML = `
      <style>
        :host {
          display: grid; grid-template-rows: auto auto auto minmax(0, 1fr) auto auto;
          height: calc(100vh - 166px); margin-right: 148px;
        }
      </style>
      <word-titlebar>RAPAT DOSEN [Compatibility Mode]  -  Microsoft Word</word-titlebar>
      <word-tabs></word-tabs>
      <word-ribbon></word-ribbon>
      <word-workspace></word-workspace>
      <word-status></word-status>
      <win-taskbar></win-taskbar>
    `;
  }
}

customElements.define("word-icon", WordIcon);
customElements.define("word-titlebar", WordTitlebar);
customElements.define("word-tabs", WordTabs);
customElements.define("ribbon-group", RibbonGroup);
customElements.define("ribbon-button", RibbonButton);
customElements.define("record-nav", RecordNav);
customElements.define("word-ribbon", WordRibbon);
customElements.define("doc-ruler", DocRuler);
customElements.define("doc-page", DocPage);
customElements.define("doc-scrollbar", DocScrollbar);
customElements.define("pane-section", PaneSection);
customElements.define("merge-pane", MergePane);
customElements.define("word-workspace", WordWorkspace);
customElements.define("word-status", WordStatus);
customElements.define("win-taskbar", WinTaskbar);
customElements.define("word-desktop", WordDesktop);
</script>
</body>
</html>
